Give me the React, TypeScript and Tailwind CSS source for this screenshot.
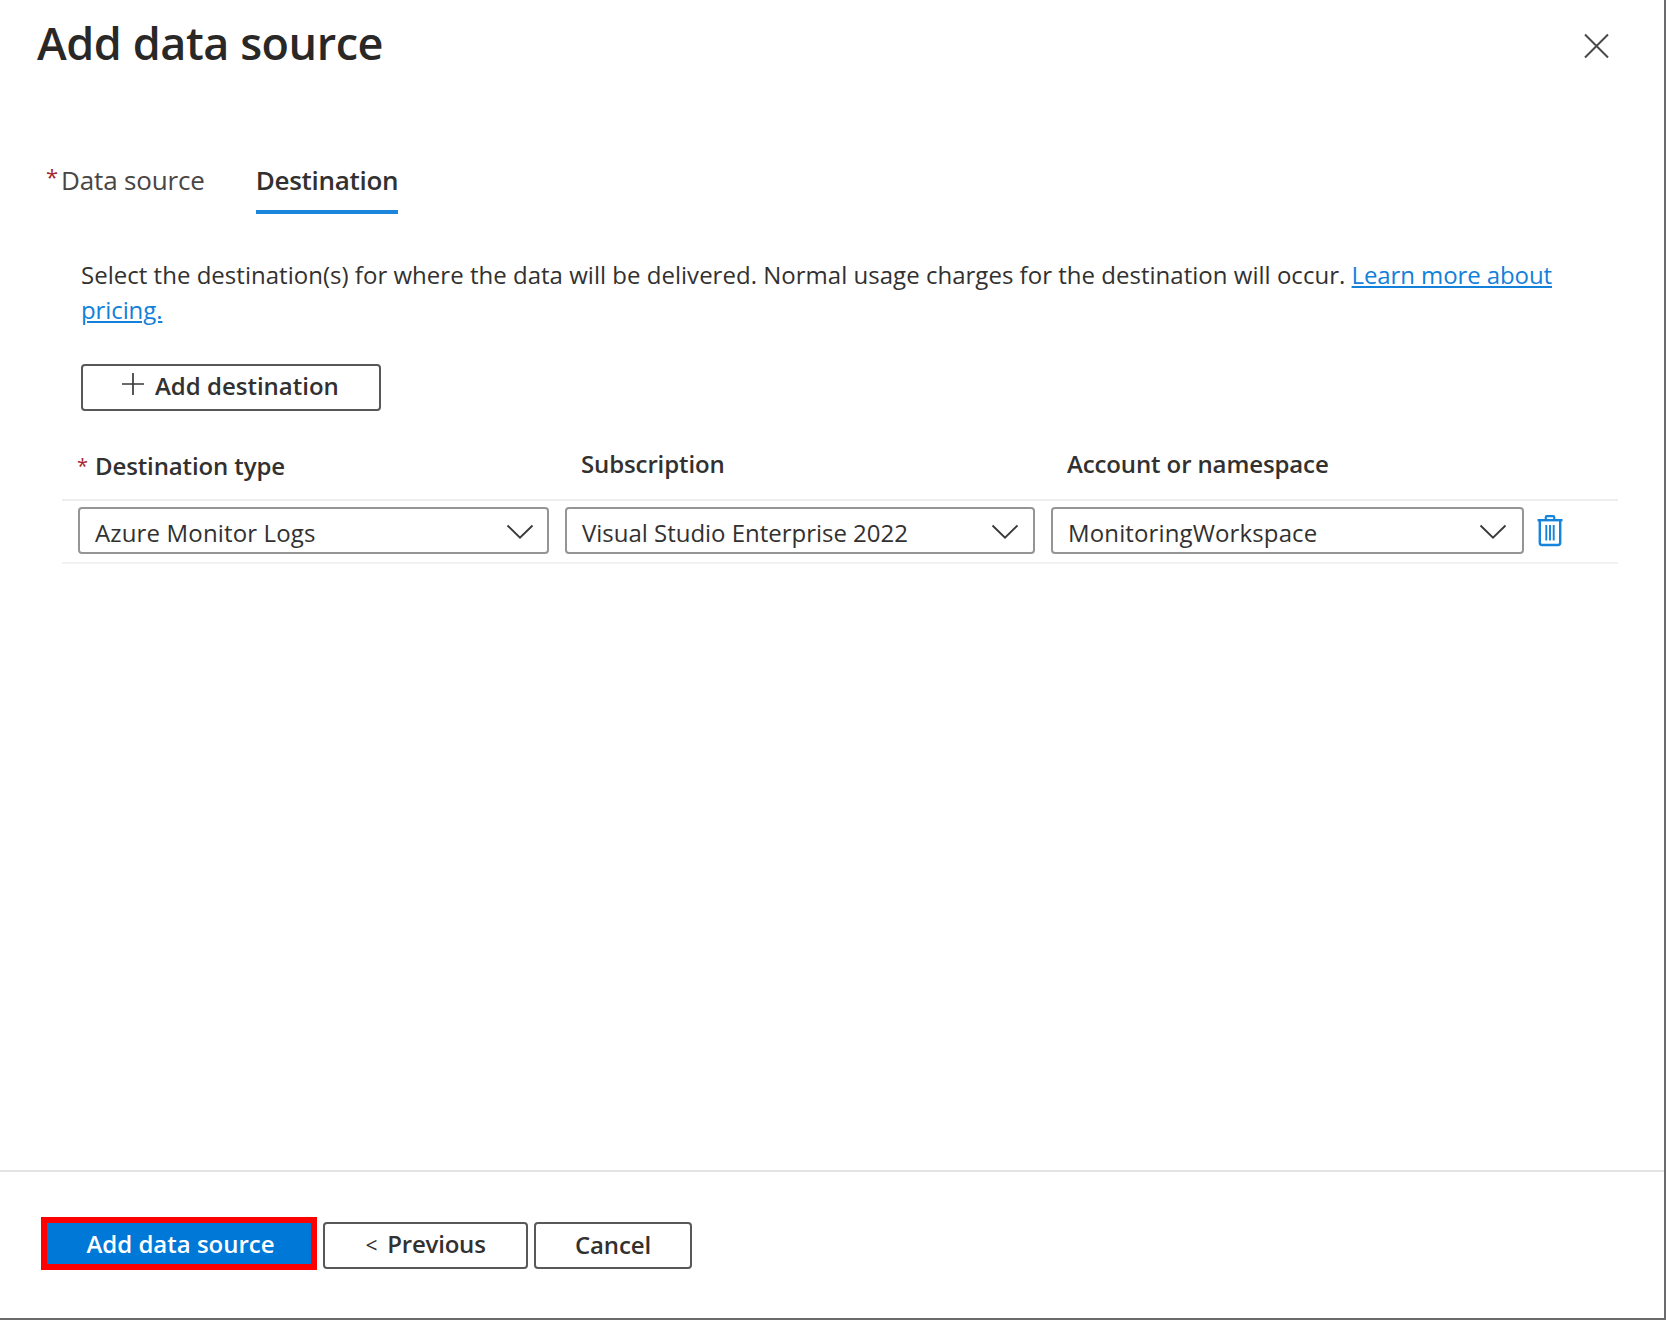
import React from "react";

type SelectProps = {
  value: string;
  className: string;
};

const ChevronDown: React.FC = () => (
  <svg className="mt-[3px]" width="28" height="16" viewBox="0 0 28 16" fill="none" stroke="#3b3a39" strokeWidth="1.9">
    <path d="M1.5 1.5L14 13.6L26.5 1.5" />
  </svg>
);

const TrashIcon: React.FC = () => (
  <svg width="26" height="33" viewBox="0 0 26 33" fill="none" stroke="#1484dc">
    <path d="M0.5 6.2H25.5" strokeWidth="2.4" />
    <path d="M8.8 5.5V3.2Q8.8 2.2 9.8 2.2H16.2Q17.2 2.2 17.2 3.2V5.5" strokeWidth="2.2" />
    <path d="M2.8 6V28.8Q2.8 31 5 31H21Q23.2 31 23.2 28.8V6" strokeWidth="2.4" />
    <path d="M9.3 11V26.5M13 11V26.5M16.7 11V26.5" strokeWidth="1.9" />
  </svg>
);

const Select: React.FC<SelectProps> = ({ value, className }) => (
  <button
    className={`flex h-[47px] items-center justify-between rounded-[4px] border-2 border-[#979593] bg-white pl-[15px] text-left font-normal ${className}`}
  >
    <span className="pt-[3px]">{value}</span>
    <ChevronDown />
  </button>
);

const App: React.FC = () => {
  return (
    <div className="flex h-[1320px] w-[1666px] flex-col border-r-2 border-b-2 border-[#6b6a6c] bg-white font-['Open_Sans','Noto_Sans',sans-serif] text-[24px] leading-[35px] text-[#323130]">
      {/* Title bar */}
      <header className="flex h-[160px] items-start justify-between pl-[37px] pr-[54px]">
        <h1 className="pt-[13px] text-[45px] font-[560] leading-[60px] tracking-[-0.45px] text-[#292827]">
          Add data source
        </h1>
        <button className="mt-[33px]" aria-label="Close">
          <svg width="26" height="26" viewBox="0 0 26 26" fill="none" stroke="#4a4948" strokeWidth="2">
            <path d="M1 1.5L24 24.5M24 1.5L1 24.5" />
          </svg>
        </button>
      </header>

      {/* Wizard tabs */}
      <nav className="flex h-[54px] gap-[51px] pl-[46px] text-[26px] leading-[41px]">
        <button className="flex text-[#484644]">
          <span className="w-[15px] text-left text-[22px] leading-[32px] text-[#a4262c]">*</span>
          <span className="tracking-[-0.15px]">Data source</span>
        </button>
        <button className="flex h-[54px] items-start border-b-4 border-[#1c86dc] font-[560] tracking-[-0.3px]">
          Destination
        </button>
      </nav>

      {/* Destination tab */}
      <main className="flex-1 pt-[43px]">
        <p className="w-[1560px] pl-[81px] tracking-[0.02px]">
          Select the destination(s) for where the data will be delivered. Normal usage charges for the destination will
          occur.{" "}
          <a href="#" className="tracking-[-0.1px] text-[#1380da] underline decoration-2 underline-offset-[2px]">
            Learn more about
            <br />
            pricing.
          </a>
        </p>

        <button className="mt-[37px] ml-[81px] flex h-[47px] w-[300px] items-center rounded-[4px] border-2 border-[#5a5857] pl-[38px] pb-[5px] font-semibold">
          <svg className="mr-[10px] mb-[3px]" width="24" height="24" viewBox="0 0 24 24" fill="none" stroke="#3b3a39" strokeWidth="1.7">
            <path d="M12 1V23M1 12H23" />
          </svg>
          Add destination
        </button>

        <div className="ml-[62px] w-[1556px]">
          <div className="grid h-[90px] grid-cols-[519px_486px_1fr] border-b-2 border-[#efeeed] pt-[35px] font-semibold tracking-[-0.12px]">
            <div className="flex pl-[15px] pt-[2px]">
              <span className="w-[18px] text-[20px] font-normal text-[#a4262c]">*</span>
              Destination type
            </div>
            <div>Subscription</div>
            <div>Account or namespace</div>
          </div>
          <div className="flex h-[63px] items-start border-b-2 border-[#f3f2f1] pl-[16px] pt-[6px]">
            <Select value="Azure Monitor Logs" className="mr-[16px] w-[471px] pr-[13px] tracking-[0.15px]" />
            <Select value="Visual Studio Enterprise 2022" className="mr-[16px] w-[470px] pr-[14px] tracking-[-0.02px]" />
            <Select value="MonitoringWorkspace" className="w-[473px] pr-[15px] tracking-[0.13px]" />
            <button className="mt-[7px] ml-[13px]" aria-label="Delete">
              <TrashIcon />
            </button>
          </div>
        </div>
      </main>

      {/* Footer actions */}
      <footer className="flex h-[148px] items-start border-t-2 border-[#e4e3e2] pl-[41px] pt-[45px] font-semibold">
        <button className="h-[53px] w-[276px] border-6 border-[#ff0000] bg-[#0078d7] pl-[3px] leading-[39px] text-white">
          Add data source
        </button>
        <button className="mt-[5px] ml-[6px] h-[47px] w-[205px] rounded-[4px] border-2 border-[#5a5857] pb-[2px] tracking-[-0.2px]">
          <span className="mr-[10px] text-[21px] font-normal">&lt;</span>
          Previous
        </button>
        <button className="mt-[5px] ml-[6px] h-[47px] w-[158px] rounded-[4px] border-2 border-[#5a5857] pb-[2px] tracking-[-0.1px]">
          Cancel
        </button>
      </footer>
    </div>
  );
};

export default App;
